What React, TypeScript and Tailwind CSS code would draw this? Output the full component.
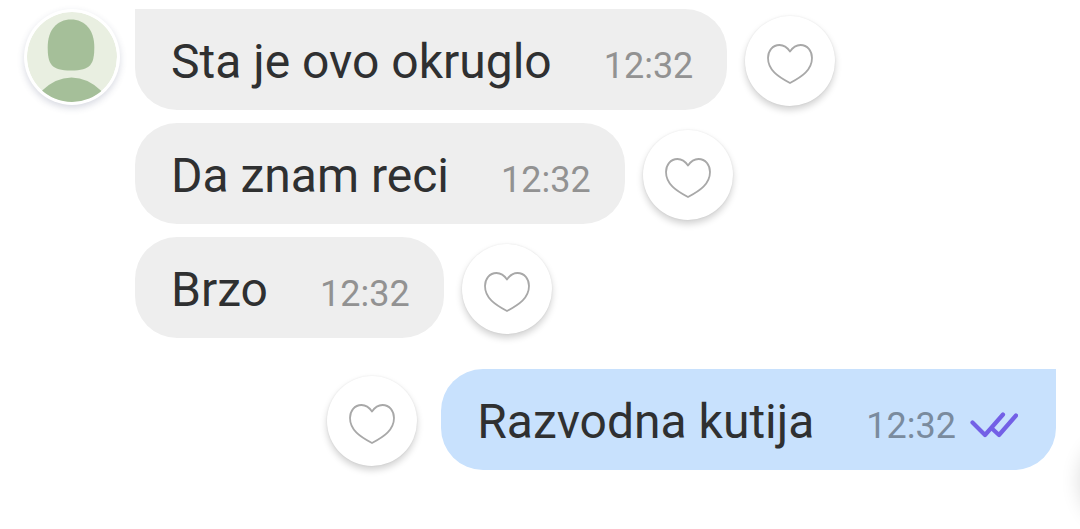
import { clsx } from "clsx";

type Message = {
  id: number;
  text: string;
  time: string;
  own?: boolean;
};

const incoming: Message[] = [
  { id: 1, text: "Sta je ovo okruglo", time: "12:32" },
  { id: 2, text: "Da znam reci", time: "12:32" },
  { id: 3, text: "Brzo", time: "12:32" },
];

const outgoing: Message[] = [
  { id: 4, text: "Razvodna kutija", time: "12:32", own: true },
];

function Avatar() {
  return (
    <div className="size-24 shrink-0 rounded-full bg-white p-[3px] shadow-[0_3px_7px_rgba(60,70,110,0.2)]">
      <svg viewBox="0 0 90 90" className="size-full rounded-full" aria-hidden="true">
        <circle cx="45" cy="45" r="45" fill="#e9efe1" />
        <path
          d="M44 7.500C58 7.500 67.300 18 67.300 35C67.300 52 64 58.500 44 58.500C24 58.500 20.700 52 20.700 35C20.700 18 30 7.500 44 7.500Z"
          fill="#a5bf99"
        />
        <path d="M14 79.500Q28 65.500 44.500 65.500T75 79.500L75 90H14Z" fill="#a5bf99" />
      </svg>
    </div>
  );
}

function LikeButton() {
  return (
    <button
      type="button"
      aria-label="Like message"
      className="mb-1 flex size-[90px] shrink-0 items-center justify-center rounded-full bg-white pt-1.5 shadow-[0_4px_7px_rgba(0,0,0,0.18),0_0_2px_rgba(0,0,0,0.08)]"
    >
      <svg viewBox="0 0 46 40" className="h-10 w-[46px]" fill="none" aria-hidden="true">
        <path
          d="M23 7.500C20 3 16.500 1 12.500 1C5.500 1 1 7 1 14C1 26 11 32.500 23 39C35 32.500 45 26 45 14C45 7 40.500 1 33.500 1C29.500 1 26 3 23 7.500Z"
          stroke="#a8a8a8"
          strokeWidth="1.800"
          strokeLinejoin="round"
        />
      </svg>
    </button>
  );
}

function SeenIcon() {
  return (
    <svg
      viewBox="0 0 48 26"
      className="ml-3.5 h-[26px] w-12"
      fill="none"
      stroke="#7360e6"
      strokeWidth="4.200"
      strokeLinecap="round"
      strokeLinejoin="round"
      role="img"
      aria-label="Seen"
    >
      <path d="M2.500 10.500L15 23L33 2.500" />
      <path d="M22.500 17L29 23L46 3.500" />
    </svg>
  );
}

function MessageRow({ message, first }: { message: Message; first: boolean }) {
  const { text, time, own } = message;
  return (
    <li className={clsx("flex items-end", own ? "flex-row-reverse gap-6" : "gap-[18px]")}>
      <div
        className={clsx(
          "flex h-[101px] items-baseline rounded-[42px] pt-[21px] pl-9",
          own ? "bg-[#c8e1fd] pr-[38px]" : "bg-[#eeeeee] pr-[34px]",
          first && (own ? "rounded-tr-none" : "rounded-tl-none"),
        )}
      >
        <p className="text-[48px] leading-[64px] text-[#2f3031]">{text}</p>
        <time
          className={clsx(
            "ml-[52px] text-[36px] leading-[48px]",
            own ? "text-[#7a8b9e]" : "text-[#929292]",
          )}
        >
          {time}
        </time>
        {own && <SeenIcon />}
      </div>
      <LikeButton />
    </li>
  );
}

export default function App() {
  return (
    <main className="relative min-h-screen overflow-hidden bg-white px-6 pt-[9px] font-[Roboto,sans-serif] whitespace-nowrap">
      <section className="flex items-start gap-[15px]">
        <Avatar />
        <ul className="flex flex-col gap-[13px]">
          {incoming.map((message, i) => (
            <MessageRow key={message.id} message={message} first={i === 0} />
          ))}
        </ul>
      </section>

      <ul className="mt-[31px] flex flex-col gap-[13px]">
        {outgoing.map((message, i) => (
          <MessageRow key={message.id} message={message} first={i === 0} />
        ))}
      </ul>

      {/* scroll button parked just past the right edge, only its shadow shows */}
      <div className="absolute -right-24 bottom-0 size-24 rounded-full shadow-[0_0_20px_rgba(0,0,0,0.14)]" />
    </main>
  );
}
